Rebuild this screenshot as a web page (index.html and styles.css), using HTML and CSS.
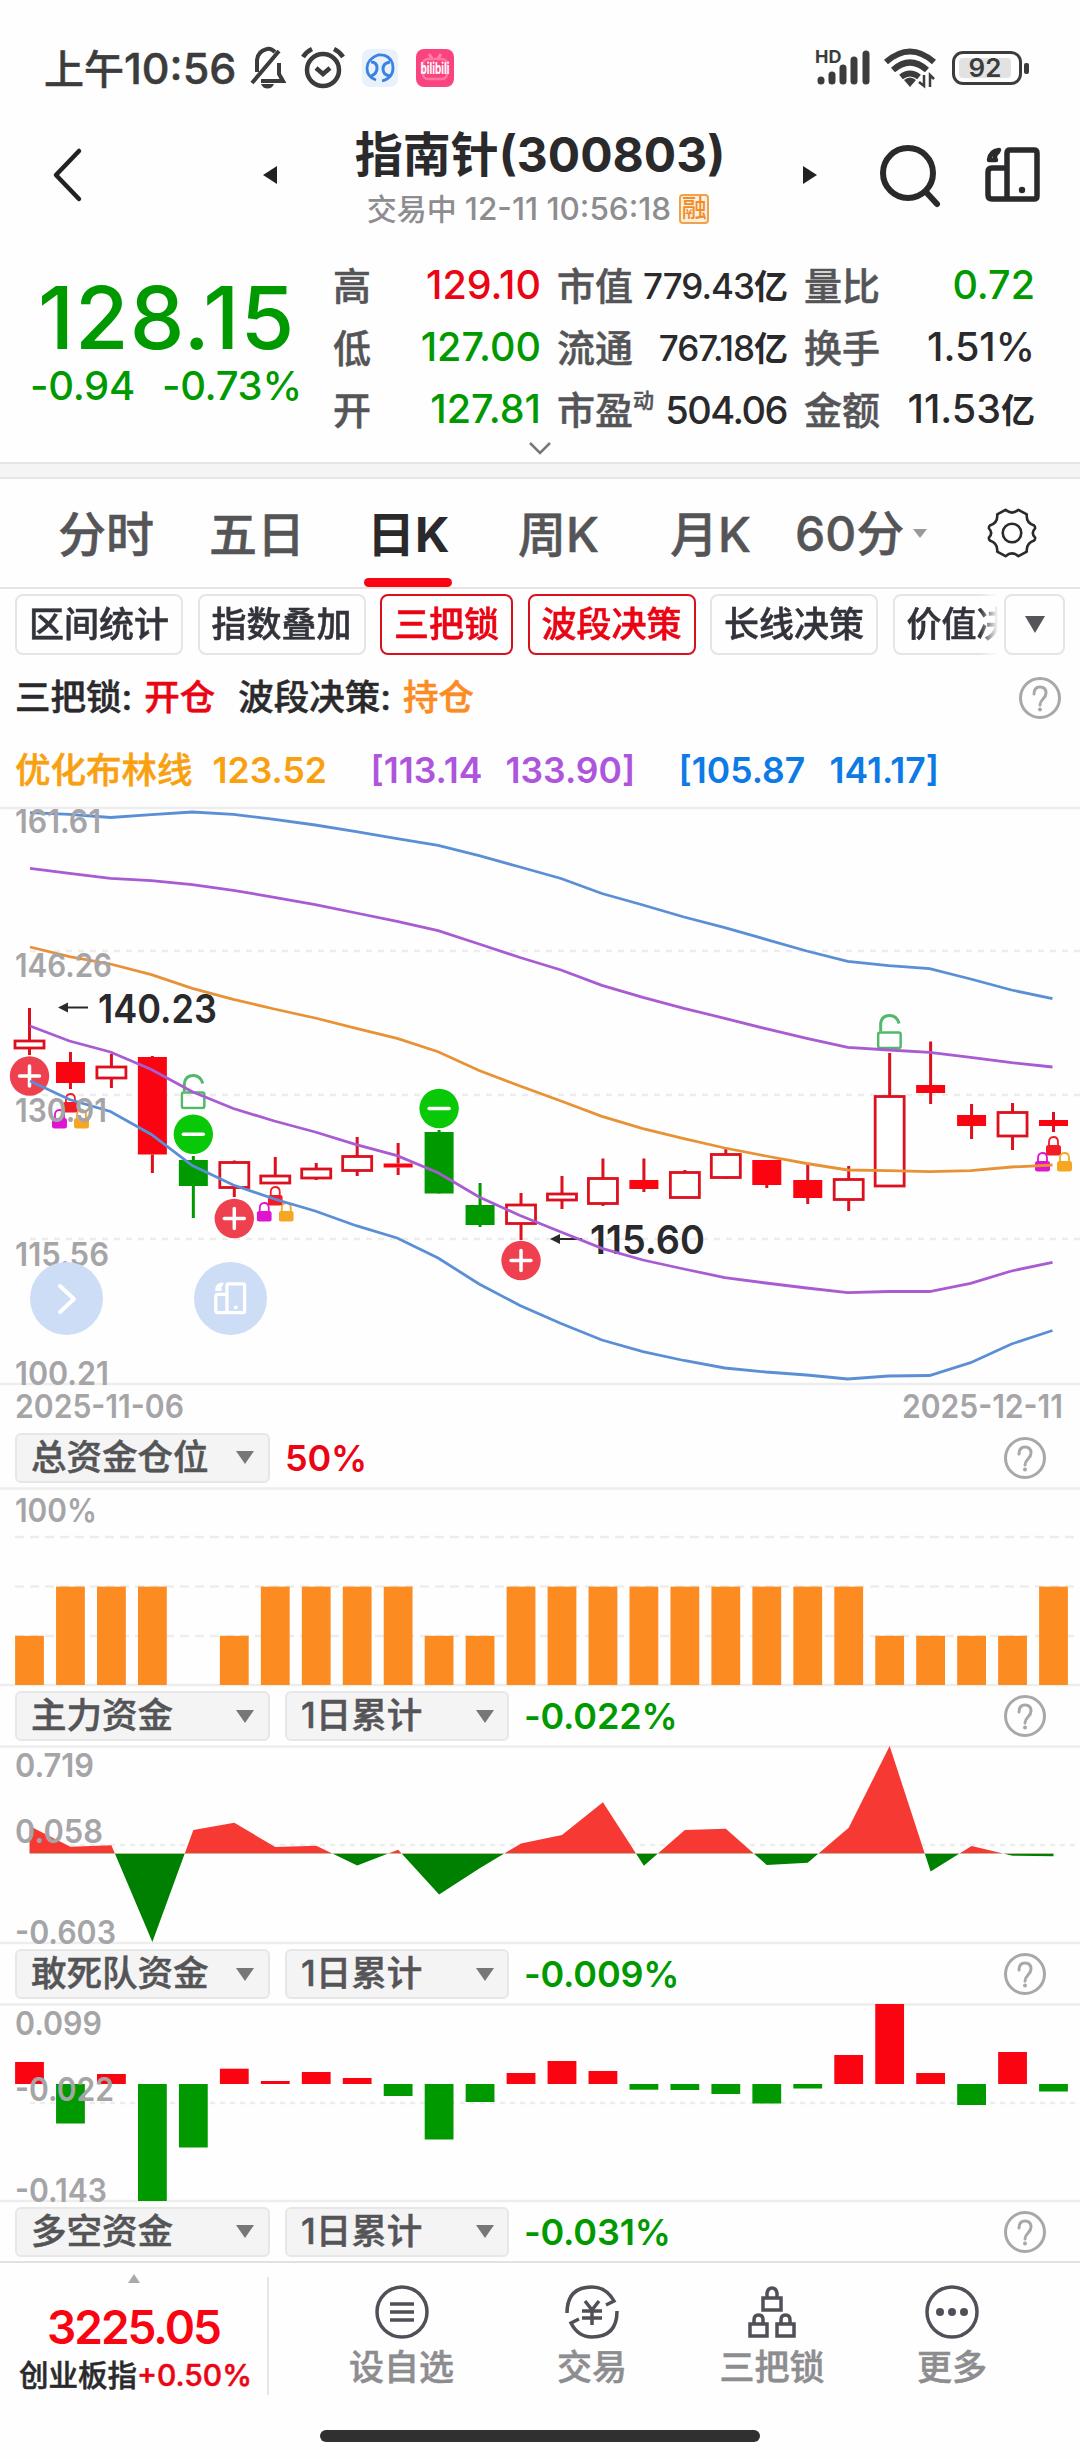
FILE: index.html
```
<!DOCTYPE html>
<html lang="zh-CN">
<head>
    <meta charset="UTF-8">
    <meta name="viewport" content="width=device-width, initial-scale=1.0">
    <title>指南针(300803)</title>
    <link rel="stylesheet" href="styles.css">
</head>
<body>

<svg width="0" height="0" class="defs">
    <symbol id="icon-rotate" viewBox="0 0 56 56">
        <path d="M22 52V6q0-3 3-3h24q3 0 3 3v43q0 3-3 3H7q-4 0-4-4V25q0-4 4-4h15" fill="none" stroke="currentColor" stroke-width="5.500" stroke-linecap="round" stroke-linejoin="round"/>
        <path d="M14 3Q5 4 4 13h7Q8 9 13 5" fill="none" stroke="currentColor" stroke-width="4.500" stroke-linecap="round" stroke-linejoin="round"/>
        <circle cx="37" cy="43" r="3.200" fill="currentColor"/>
    </symbol>
    <symbol id="icon-help" viewBox="0 0 44 44">
        <circle cx="22" cy="22" r="19.5" fill="none" stroke="#a8a8a8" stroke-width="3"/>
        <path d="M16 18q0-7 6-7t6 6q0 3-3 6t-3 6" fill="none" stroke="#a8a8a8" stroke-width="3" stroke-linecap="round"/>
        <circle cx="22" cy="33.5" r="2" fill="#a8a8a8"/>
    </symbol>
    <symbol id="lock-open" viewBox="0 0 26 36">
        <path d="M4 18V10q1-8 9-8 7 0 9.500 8" fill="none" stroke="#52b96c" stroke-width="3"/>
        <rect x="1.500" y="19" width="22.500" height="15.500" rx="2" fill="none" stroke="#52b96c" stroke-width="2.500"/>
    </symbol>
    <symbol id="lock-small" viewBox="0 0 15 20">
        <path d="M3 11V6q0-5 4.500-5T12 6v5" fill="none" stroke="currentColor" stroke-width="1.800"/>
        <rect x="0" y="9" width="15" height="10.500" rx="2.500" fill="currentColor"/>
    </symbol>
</svg>

<div class="status-bar">
    <span class="time">上午<b>10:56</b></span>
    <svg class="st-bell" width="40" height="42" viewBox="0 0 40 42" fill="none" stroke="#3c3c3c" stroke-width="4">
        <path d="M32 4L5 36M28 5q-4-4-8-3-9 2-10 11v12M32 16v11l4 7H14"/>
        <path d="M14 37h13q-2 4.500-6.500 4.500T14 37z" fill="#3c3c3c" stroke="none"/>
    </svg>
    <svg class="st-alarm" width="44" height="40" viewBox="0 0 44 40" fill="none" stroke="#3c3c3c" stroke-width="4.500">
        <circle cx="22" cy="22" r="16"/>
        <path d="M2 9q3-5 9-8M42 9q-3-5-9-8M15 20l7 6 7-6"/>
    </svg>
    <svg class="st-app" width="36" height="38" viewBox="0 0 36 38">
        <rect width="36" height="38" rx="8" fill="#e9f1fb"/>
        <path d="M14 31Q5 28 5 19T16 6q9-1 13 6M22 6q9 3 9 13T20 32" fill="none" stroke="#3b83e2" stroke-width="2.800"/>
        <path d="M9 13q6 0 6 6t-6 8M28 13q-7 1-7 7t7 7" fill="none" stroke="#3b83e2" stroke-width="3"/>
    </svg>
    <svg class="st-bili" width="38" height="38" viewBox="0 0 38 38">
        <rect width="38" height="38" rx="8" fill="#fb4380"/>
        <path d="M13 5l4 6M25 5l-4 6" stroke="#ff80a8" stroke-width="3"/>
        <rect x="7" y="10" width="24" height="20" rx="5" fill="none" stroke="#ff78a2" stroke-width="2.500"/>
        <text x="19" y="25" text-anchor="middle" textLength="29" lengthAdjust="spacingAndGlyphs">bilibili</text>
    </svg>
    <div class="status-right">
        <svg width="58" height="40" viewBox="0 0 58 40">
            <text x="0" y="15" class="hd">HD</text>
            <g stroke="#3c3c3c" stroke-width="7" stroke-linecap="round">
                <path d="M6 33v-1M17 33v-6M28 33V20M39 33V12M51 33V6"/>
            </g>
        </svg>
        <svg class="st-wifi" width="52" height="40" viewBox="0 0 52 40" fill="none" stroke="#3c3c3c" stroke-width="6">
            <path d="M2 14Q26-7 50 14M9 22q17-15 34 0M17 29q9-7 18 0"/>
            <path d="M20 32l6 7 6-7q-6-5-12 0z" fill="#3c3c3c" stroke="none"/>
            <path d="M40 27v11l-5-4M46 39V27l4 4" stroke-width="2.500"/>
        </svg>
        <div class="battery"><span>92</span></div>
    </div>
</div>

<header>
    <svg class="back" width="30" height="56" viewBox="0 0 30 56" fill="none" stroke="#222" stroke-width="4.500" stroke-linecap="round" stroke-linejoin="round"><path d="M26 4L3 28l23 24"/></svg>
    <svg class="prev" width="14" height="18"><path d="M14 0v18L0 9z" fill="#222"/></svg>
    <div class="title">
        <h1>指南针<span>(300803)</span></h1>
        <div class="subtitle"><span>交易中 <b>12-11 10:56:18</b></span><i>融</i></div>
    </div>
    <svg class="next" width="14" height="18"><path d="M0 0v18l14-9z" fill="#222"/></svg>
    <svg class="search" width="64" height="64" viewBox="0 0 64 64" fill="none" stroke="#2a2a2c" stroke-width="6" stroke-linecap="round"><circle cx="30" cy="30" r="25"/><path d="M48 49l11 12"/></svg>
    <svg class="rotate" width="56" height="56"><use href="#icon-rotate"/></svg>
</header>

<section class="quote">
    <div class="price">
        <div class="now">128.15</div>
        <div class="change"><span>-0.94</span><span>-0.73%</span></div>
    </div>
    <div class="col col-1">
        <div><label>高</label><span class="red">129.10</span></div>
        <div><label>低</label><span class="green">127.00</span></div>
        <div><label>开</label><span class="green">127.81</span></div>
    </div>
    <div class="col col-2">
        <div><label>市值</label><span class="small">779.43<b>亿</b></span></div>
        <div><label>流通</label><span class="small">767.18<b>亿</b></span></div>
        <div><label>市盈<sup>动</sup></label><span class="pe">504.06</span></div>
    </div>
    <div class="col col-3">
        <div><label>量比</label><span class="green">0.72</span></div>
        <div><label>换手</label><span>1.51%</span></div>
        <div><label>金额</label><span>11.53<b>亿</b></span></div>
    </div>
    <svg class="expand" width="24" height="14" viewBox="0 0 24 14" fill="none" stroke="#777" stroke-width="2.500"><path d="M2 2l10 10L22 2"/></svg>
</section>
<div class="divider"></div>

<nav class="tabs">
    <span class="t1">分时</span>
    <span class="t2">五日</span>
    <span class="t3 active">日K</span>
    <span class="t4">周K</span>
    <span class="t5">月K</span>
    <span class="more">60分<svg width="14" height="9"><path d="M0 0h14L7 9z" fill="#999"/></svg></span>
    <svg class="gear" width="50" height="50" viewBox="0 0 54 54" fill="none" stroke="#2a2a2c" stroke-width="2.800" stroke-linejoin="round">
        <path d="M20 2q7 6 14 0l9 5q-1 9 8 12 1 1 1 3-5 5 0 10 0 2-1 3-9 3-8 12l-9 5q-7-6-14 0l-9-5q1-9-8-12-1-1-1-3 5-5 0-10 0-2 1-3 9-3 8-12z"/>
        <circle cx="27" cy="27" r="10"/>
    </svg>
</nav>

<div class="chips">
    <div class="chip-scroll">
        <span class="chip">区间统计</span>
        <span class="chip">指数叠加</span>
        <span class="chip on">三把锁</span>
        <span class="chip on">波段决策</span>
        <span class="chip">长线决策</span>
        <span class="chip">价值决策</span>
    </div>
    <div class="chip-more"><svg width="22" height="17"><path d="M1 0h20L11 17z" fill="#555559"/></svg></div>
</div>

<div class="signal">
    <span class="k1">三把锁:</span><span class="v1">开仓</span><span class="k2">波段决策:</span><span class="v2">持仓</span>
    <svg class="help" width="44" height="44"><use href="#icon-help"/></svg>
</div>
<div class="boll">
    <span class="mid name">优化布林线</span><span class="mid n1">123.52</span>
    <span class="inner n2">[113.14</span><span class="inner n3">133.90]</span>
    <span class="outer n4">[105.87</span><span class="outer n5">141.17]</span>
</div>

<div class="main-chart">
    <svg id="kline" width="1080" height="625" viewBox="0 800 1080 625"></svg>
    <button class="float f1"><svg width="20" height="32" viewBox="0 0 20 32" fill="none" stroke="#fff" stroke-width="4" stroke-linecap="round" stroke-linejoin="round"><path d="M3 3l14 13L3 29"/></svg></button>
    <button class="float f2"><svg width="33" height="33"><use href="#icon-rotate"/></svg></button>
</div>

<div class="panel-head first">
    <div class="select wide">总资金仓位<i></i></div>
    <span class="val red">50%</span>
    <svg class="help" width="44" height="44"><use href="#icon-help"/></svg>
</div>
<svg id="position" class="sub" width="1080" height="198" viewBox="0 1488 1080 198"></svg>

<div class="panel-head">
    <div class="select wide">主力资金<i></i></div>
    <div class="select period">1日累计<i></i></div>
    <span class="val green">-0.022%</span>
    <svg class="help" width="44" height="44"><use href="#icon-help"/></svg>
</div>
<svg id="mainfund" class="sub" width="1080" height="198" viewBox="0 1746 1080 198"></svg>

<div class="panel-head">
    <div class="select wide">敢死队资金<i></i></div>
    <div class="select period">1日累计<i></i></div>
    <span class="val green">-0.009%</span>
    <svg class="help" width="44" height="44"><use href="#icon-help"/></svg>
</div>
<svg id="hotfund" class="sub" width="1080" height="198" viewBox="0 2004 1080 198"></svg>

<div class="panel-head bottom">
    <div class="select wide">多空资金<i></i></div>
    <div class="select period">1日累计<i></i></div>
    <span class="val green">-0.031%</span>
    <svg class="help" width="44" height="44"><use href="#icon-help"/></svg>
</div>

<footer>
    <div class="index">
        <svg width="12" height="9"><path d="M6 0l6 9H0z" fill="#aaa"/></svg>
        <strong>3225.05</strong>
        <p>创业板指<span>+0.50%</span></p>
    </div>
    <div class="menu">
        <a>
            <svg width="56" height="56" viewBox="0 0 56 56" fill="none" stroke="#505058" stroke-width="3.500"><circle cx="28" cy="28" r="25"/><path d="M16 20h24M16 28h24M16 36h24"/></svg>
            设自选
        </a>
        <a>
            <svg width="56" height="56" viewBox="0 0 56 56" fill="none" stroke="#505058" stroke-width="3.500">
                <path d="M3 29Q3 3 28 3q14 0 22 14l-8 4M53 27q0 26-25 26-14 0-21-14l8-4M21 17l7 9 7-9M28 26v15M18 27h20M18 34h20"/>
            </svg>
            交易
        </a>
        <a>
            <svg width="56" height="56" viewBox="0 0 56 56" fill="none" stroke="#505058" stroke-width="3.500">
                <rect x="19" y="14" width="18" height="12"/><path d="M23 14V9q1-5 5-5t5 5v5"/>
                <rect x="6" y="40" width="17" height="12"/><path d="M10 40v-4q0-5 4.500-5t4.500 5v4"/>
                <rect x="33" y="40" width="17" height="12"/><path d="M37 40v-4q0-5 4.500-5t4.500 5v4"/>
            </svg>
            三把锁
        </a>
        <a>
            <svg width="56" height="56" viewBox="0 0 56 56"><circle cx="28" cy="28" r="25" fill="none" stroke="#505058" stroke-width="3.500"/><g fill="#505058"><circle cx="16" cy="28" r="4"/><circle cx="28" cy="28" r="4"/><circle cx="40" cy="28" r="4"/></g></svg>
            更多
        </a>
    </div>
</footer>
<div class="home-bar"></div>

<script>
    const STEP = 40.96;
    const cx = i => 29.5 + STEP * i;

    function line(y, x1, dash) {
        return `<line x1="${x1}" y1="${y}" x2="1080" y2="${y}" stroke="#ededed" stroke-width="2.5" ${dash ? 'stroke-dasharray="' + dash + '"' : ''}/>`;
    }
    function label(x, y, text, width, cls) {
        return `<text x="${x}" y="${y}" textLength="${width}" lengthAdjust="spacingAndGlyphs" class="${cls || 'axis'}">${text}</text>`;
    }
    function curve(ys, color) {
        const pts = ys.map((y, i) => `${(cx(i) + (i ? -1 : 0.5)).toFixed(1)},${y}`).join(' ');
        return `<polyline points="${pts}" fill="none" stroke="${color}" stroke-width="2.8"/>`;
    }

    // K线: [类型, 最高, 实体上, 实体下, 最低]  h=空心 r=红色 g=绿色
    const candles = [
        ['h', 1008, 1041, 1048, 1055], ['r', 1052, 1062, 1083, 1089], ['h', 1054, 1067, 1078, 1088],
        ['r', 1056, 1057, 1154.5, 1173], ['g', 1156, 1160, 1186, 1218], ['h', 1160.5, 1162.5, 1187.5, 1197],
        ['h', 1157, 1176, 1183, 1184], ['h', 1163, 1169, 1178, 1180], ['h', 1137, 1156.5, 1170.5, 1176],
        ['r', 1143, 1163.5, 1167.5, 1175], ['g', 1130, 1132, 1193.5, 1194], ['g', 1183, 1205, 1225, 1227],
        ['h', 1193, 1205, 1223.5, 1240], ['h', 1176, 1194, 1200, 1209], ['h', 1158.5, 1178.5, 1203.5, 1206],
        ['r', 1158.5, 1180, 1189, 1192], ['h', 1170, 1172.5, 1197.5, 1198], ['h', 1149, 1154.5, 1177.5, 1179],
        ['r', 1160, 1160, 1185, 1188], ['r', 1164, 1180, 1198, 1204], ['h', 1166, 1179.5, 1199.5, 1211],
        ['h', 1053, 1096.5, 1186, 1186], ['r', 1041.5, 1085, 1093, 1104], ['r', 1104, 1115, 1126, 1139],
        ['h', 1103, 1112.5, 1136, 1150], ['r', 1112, 1120, 1126, 1132]
    ];

    const upper = [812.7, 814.3, 817.5, 814.7, 812, 814.3, 819.3, 825, 831.7, 838.7, 845.3, 855.7, 867, 878.5, 893.5, 905, 917, 927.7, 939.3, 951, 961.3, 965.7, 968.7, 979, 990, 998.7];
    const upper2 = [868.3, 873.3, 878.3, 880.7, 884.7, 890.3, 897.3, 904.7, 913, 921.3, 930.7, 944, 957.5, 970, 985.3, 997.3, 1008.3, 1018.3, 1028.7, 1038.3, 1047.3, 1050, 1052.3, 1057.3, 1062.7, 1067];
    const middle = [947, 956.7, 964, 974.7, 988.3, 999.3, 1009, 1018, 1028.3, 1038.3, 1051.7, 1070.5, 1086, 1101, 1116.3, 1128.7, 1138.7, 1148, 1156, 1163.5, 1170, 1170.7, 1171.7, 1170.7, 1167, 1165];
    const lower2 = [1026, 1041, 1052, 1069.5, 1091.7, 1108.5, 1121, 1132, 1144.7, 1155.7, 1172.7, 1197, 1215.5, 1232, 1248.3, 1260, 1269, 1277.7, 1283, 1288, 1292.7, 1291.5, 1291.5, 1283.3, 1271, 1262.3];
    const lower = [1081, 1099.5, 1111.5, 1134.5, 1165.5, 1185, 1199, 1211, 1225.7, 1238, 1258, 1284, 1305.5, 1323.5, 1340, 1351.7, 1360.5, 1368, 1372, 1375, 1379, 1376, 1375.5, 1362.7, 1344, 1330.5];

    function drawKline() {
        let s = line(808, 0) + line(1384, 0);
        [951, 1095, 1239].forEach(y => s += line(y, 30, '6 6'));

        candles.forEach(([type, high, top, bottom, low], i) => {
            const x = cx(i);
            const color = type === 'g' ? '#009900' : '#dc101e';
            s += `<path d="M${x} ${high}V${top}M${x} ${bottom}V${low}" stroke="${color}" stroke-width="3"/>`;
            if (type === 'h') {
                s += `<rect x="${x - 14.5}" y="${top}" width="29" height="${bottom - top}" fill="#fff" stroke="#dc101e" stroke-width="2.8"/>`;
            } else {
                s += `<rect x="${x - 14.5}" y="${top}" width="29" height="${bottom - top}" fill="${type === 'g' ? '#009900' : '#fb0412'}"/>`;
            }
        });

        // 买卖点
        [[0, 1076], [5, 1218.5], [12, 1260.5]].forEach(([i, y]) => {
            const x = cx(i);
            s += `<circle cx="${x}" cy="${y}" r="19.7" fill="#ee404e"/><path d="M${x - 10} ${y}h20M${x} ${y - 10}v20" stroke="#fff" stroke-width="3.5" stroke-linecap="round"/>`;
        });
        [[4, 1134.3], [10, 1108.5]].forEach(([i, y]) => {
            const x = cx(i);
            s += `<circle cx="${x}" cy="${y}" r="19.7" fill="#08c808"/><path d="M${x - 10} ${y}h20" stroke="#fff" stroke-width="3.5" stroke-linecap="round"/>`;
        });

        // 锁
        [[4, 1073.5], [21, 1013.5]].forEach(([i, y]) => {
            s += `<use href="#lock-open" x="${cx(i) - 13}" y="${y}" width="26" height="36"/>`;
        });
        [[1, 1093], [6, 1186], [25, 1136]].forEach(([i, y]) => {
            const x = cx(i);
            s += `<use href="#lock-small" color="#f21c24" x="${x - 7.5}" y="${y}" width="15" height="20"/>`;
            s += `<use href="#lock-small" color="#de14d0" x="${x - 18.5}" y="${y + 16}" width="15" height="20"/>`;
            s += `<use href="#lock-small" color="#f5a623" x="${x + 3.5}" y="${y + 16}" width="15" height="20"/>`;
        });

        s += label(98, 1022.5, '140.23', 119, 'mark') + label(590, 1253.5, '115.60', 115, 'mark');
        s += '<path d="M66 1007.500h22M558 1239h24" stroke="#2a2a2c" stroke-width="1.800"/><path d="M58 1007.500l10-5v10zM550 1239l10-5v10z" fill="#2a2a2c"/>';

        s += curve(upper, '#5a8fd6') + curve(upper2, '#a95bd2') + curve(middle, '#e89236') + curve(lower2, '#a95bd2') + curve(lower, '#5a8fd6');

        s += label(15, 833, '161.61', 86) + label(15, 977, '146.26', 97) + label(15, 1121.5, '130.91', 92);
        s += label(15, 1265.5, '115.56', 94) + label(15, 1384.5, '100.21', 94);
        s += label(15, 1417.5, '2025-11-06', 169) + label(902, 1417.5, '2025-12-11', 161);
        document.getElementById('kline').innerHTML = s;
    }

    function drawPosition() {
        const pos = [1, 2, 2, 2, 0, 1, 2, 2, 2, 2, 1, 1, 2, 2, 2, 2, 2, 2, 2, 2, 2, 1, 1, 1, 1, 2];
        let s = line(1488.5, 0) + line(1685, 0);
        [1537, 1586.5, 1636].forEach(y => s += line(y, 15, '9 6'));
        pos.forEach((p, i) => {
            s += `<rect x="${cx(i) - 14.4}" y="${1685 - p * 49.2}" width="28.8" height="${p * 49.2}" fill="#fc8c22"/>`;
        });
        s += label(15, 1521.5, '100%', 82);
        document.getElementById('position').innerHTML = s;
    }

    function drawMainFund() {
        const zero = 1853.5;
        const ys = [1826, 1846.7, 1845.3, 1942, 1830, 1822.7, 1847, 1845.7, 1865.5, 1849.7, 1894.5, 1868, 1843.5, 1835, 1802.3, 1865.7, 1830, 1828.7, 1865, 1862.7, 1827.7, 1746, 1871.5, 1846, 1855.7, 1856.3];
        const area = `M29.5 ${zero}` + ys.map((y, i) => `L${cx(i)} ${y}`).join('') + `V${zero}z`;
        let s = line(1746.5, 0) + line(1943, 0) + line(1845, 30, '5 5');
        s += `<clipPath id="up"><rect x="0" y="1746" width="1080" height="${zero - 1746}"/></clipPath>`;
        s += `<clipPath id="down"><rect x="0" y="${zero}" width="1080" height="92"/></clipPath>`;
        s += `<path d="${area}" fill="#f63a33" clip-path="url(#up)"/><path d="${area}" fill="#008000" clip-path="url(#down)"/>`;
        s += label(15, 1776.5, '0.719', 79) + label(15, 1842.5, '0.058', 88) + label(15, 1943.5, '-0.603', 101);
        document.getElementById('mainfund').innerHTML = s;
    }

    function drawHotFund() {
        const zero = 2084;
        const ys = [2062, 2123.5, 2074, 2201, 2147.5, 2068.7, 2081, 2072, 2078, 2096, 2139.5, 2102, 2073, 2061, 2071, 2089.7, 2090, 2094, 2103.5, 2088.5, 2055, 2004, 2073, 2105, 2052, 2091.5];
        let s = line(2004.5, 0) + line(2201, 0) + line(2103, 30, '5 5');
        ys.forEach((y, i) => {
            s += `<rect x="${cx(i) - 14.4}" y="${Math.min(y, zero)}" width="28.8" height="${Math.abs(y - zero)}" fill="${y < zero ? '#fb0412' : '#009900'}"/>`;
        });
        s += label(15, 2034.5, '0.099', 87) + label(15, 2100.5, '-0.022', 99) + label(15, 2201.5, '-0.143', 92);
        document.getElementById('hotfund').innerHTML = s;
    }

    drawKline();
    drawPosition();
    drawMainFund();
    drawHotFund();
</script>
</body>
</html>
```
FILE: styles.css
```
* {
    box-sizing: border-box;
}
body {
    margin: 0;
    width: 1080px;
    height: 2460px;
    overflow: hidden;
    background-color: #fefefe;
    color: #2a2a2c;
    font-family: Inter, "Noto Sans CJK SC", sans-serif;
    font-weight: 500;
    line-height: 1;
}
svg {
    display: block;
    flex-shrink: 0;
    overflow: visible;
}
.defs {
    position: absolute;
}
.red {
    color: #eb0514;
}
.green {
    color: #009a00;
}
.time, .col label, .tabs, .chip, .signal span, .boll .name, .select, .index p, .menu {
    -webkit-text-stroke: 0.5px currentColor;
}

/* 状态栏 */
.status-bar {
    display: flex;
    align-items: center;
    height: 120px;
    padding: 16px 58px 0 44px;
}
.time {
    width: 203px;
    font-size: 40px;
    white-space: nowrap;
    color: #3c3c3c;
}
.time b {
    font-size: 43px;
    font-weight: 500;
}
.st-alarm {
    margin-left: 14px;
}
.st-app {
    margin-left: 17px;
}
.st-bili {
    margin-left: 18px;
}
.st-bili text {
    fill: #fff;
    font-size: 16px;
    font-weight: 700;
}
.hd {
    font-size: 18px;
    font-weight: 700;
    fill: #3c3c3c;
}
.status-right {
    display: flex;
    align-items: center;
    margin-left: auto;
}
.st-wifi {
    margin-left: 11px;
}
.battery {
    position: relative;
    width: 70px;
    height: 34px;
    margin-left: 16px;
    padding: 4px;
    border: 3px solid #3c3c3c;
    border-radius: 11px;
}
.battery span {
    display: block;
    width: 52px;
    height: 20px;
    background-color: #e2e2e2;
    border-radius: 4px;
    font-size: 26px;
    font-weight: 600;
    line-height: 20px;
    text-align: center;
    color: #3c3c3c;
}
.battery::after {
    content: "";
    position: absolute;
    right: -10px;
    top: 9px;
    width: 5px;
    height: 11px;
    background-color: #3c3c3c;
    border-radius: 2px;
}

/* 标题 */
header {
    display: flex;
    align-items: center;
    height: 120px;
    padding: 0 39px 10px 53px;
}
.prev {
    margin-left: 180px;
}
.title {
    width: 526px;
    padding-top: 8px;
    text-align: center;
}
.title h1 {
    margin: 0;
    font-size: 48px;
    line-height: 60px;
    font-weight: 700;
    white-space: nowrap;
}
.subtitle {
    display: flex;
    justify-content: center;
    align-items: center;
    gap: 8px;
    height: 48px;
    margin-right: 4px;
    font-size: 30px;
    color: #8d8d90;
}
.subtitle b {
    font-size: 31.500px;
    font-weight: 500;
}
.subtitle i {
    width: 30px;
    height: 30px;
    border: 2px solid #f2a04a;
    border-radius: 4px;
    background-color: #fdf0df;
    color: #ef8d2a;
    font-size: 25px;
    font-style: normal;
    line-height: 25px;
}
.search {
    margin-left: 61px;
}
.rotate {
    margin-left: auto;
    color: #2a2a2c;
}

/* 行情 */
.quote {
    display: flex;
    position: relative;
    height: 222px;
    padding-top: 15px;
}
.price {
    width: 333px;
    color: #009a00;
}
.now {
    margin-top: 19px;
    padding-left: 38px;
    font-size: 87px;
    line-height: 87px;
    letter-spacing: 1px;
}
.change {
    display: flex;
    gap: 27px;
    padding-left: 30px;
    margin-top: 2px;
    font-size: 40px;
    line-height: 46px;
    letter-spacing: -0.3px;
}
.col > div {
    display: flex;
    justify-content: space-between;
    align-items: center;
    height: 62px;
    font-size: 39.500px;
    white-space: nowrap;
}
.col label {
    font-size: 38px;
    color: #555558;
}
.col sup {
    font-size: 21px;
    line-height: 0;
    vertical-align: 16px;
}
.col b {
    font-size: 34px;
}
.col .small {
    font-size: 35px;
    letter-spacing: -1px;
}
.col .pe {
    font-size: 38px;
    letter-spacing: -1.500px;
}
.col-1 {
    width: 208px;
}
.col-2 {
    width: 230px;
    margin-left: 16px;
}
.col-3 {
    width: 231px;
    margin-left: 17px;
}
.expand {
    position: absolute;
    left: 528px;
    bottom: 7px;
}
.divider {
    height: 17px;
    background-color: #f4f4f4;
    border-top: 2px solid #e5e5e5;
    border-bottom: 2px solid #e5e5e5;
}

/* 周期 */
.tabs {
    display: flex;
    align-items: center;
    height: 110px;
    padding-left: 58px;
    border-bottom: 2px solid #e5e5e5;
    font-size: 48px;
    color: #555558;
}
.tabs span {
    height: 108px;
    line-height: 111px;
    white-space: nowrap;
}
.t1 {
    width: 151px;
}
.t2 {
    width: 158px;
}
.t3 {
    width: 151px;
}
.t4 {
    width: 152px;
}
.t5 {
    width: 125px;
}
.tabs .active {
    position: relative;
    font-weight: 700;
    color: #2a2a2c;
    -webkit-text-stroke: 0;
}
.tabs .active::after {
    content: "";
    position: absolute;
    left: -3px;
    bottom: 0;
    width: 88px;
    height: 9px;
    border-radius: 5px;
    background-color: #fb0412;
}
.tabs .more {
    display: flex;
    align-items: center;
    gap: 9px;
}
.gear {
    margin-left: auto;
    margin-right: 43px;
}

/* 指标 */
.chips {
    display: flex;
    height: 72px;
    padding: 5px 15px 0;
}
.chip-scroll {
    display: flex;
    gap: 14.500px;
    width: 983px;
    height: 62px;
    overflow: hidden;
    -webkit-mask-image: linear-gradient(to right, #000 965px, transparent 983px);
    mask-image: linear-gradient(to right, #000 965px, transparent 983px);
}
.chip {
    flex: none;
    height: 61px;
    padding: 0 12px;
    border: 2px solid #e5e5e5;
    border-radius: 8px;
    font-size: 35px;
    line-height: 57px;
    color: #33333c;
}
.chip.on {
    border-color: #d8101e;
    color: #eb0514;
}
.chip-more {
    display: flex;
    align-items: center;
    justify-content: center;
    width: 61px;
    height: 61px;
    margin-left: 6px;
    border: 2px solid #e5e5e5;
    border-radius: 8px;
}
.signal {
    display: flex;
    align-items: center;
    height: 75px;
    padding: 0 18px 1px 15px;
    font-size: 35.500px;
}
.v1 {
    margin-left: 12px;
    color: #eb0514;
}
.k2 {
    margin-left: 23px;
}
.v2 {
    margin-left: 12px;
    color: #fb8c22;
}
.help {
    margin-left: auto;
}
.boll {
    display: flex;
    align-items: center;
    height: 64px;
    padding: 6px 0 0 15px;
    font-size: 35.500px;
    font-weight: 600;
}
.name {
    font-weight: 500;
}
.mid {
    color: #f8a010;
}
.inner {
    color: #ad55dc;
}
.outer {
    color: #0e7ae6;
}
.n1 {
    margin-left: 20px;
    width: 158px;
}
.n2 {
    width: 135px;
}
.n3 {
    width: 173px;
}
.n4 {
    width: 151px;
}

/* 图表 */
.main-chart {
    position: relative;
    height: 625px;
}
.axis {
    fill: #a5a5a8;
    font-size: 33px;
    font-weight: 600;
}
.mark {
    fill: #2a2a2c;
    font-size: 40px;
    font-weight: 600;
}
.float {
    position: absolute;
    top: 462px;
    display: flex;
    align-items: center;
    justify-content: center;
    width: 73px;
    height: 73px;
    padding: 0;
    border: none;
    border-radius: 50%;
    background-color: #cdddf6;
    color: #fff;
}
.f1 {
    left: 30px;
}
.f2 {
    left: 194px;
}
.panel-head {
    display: flex;
    align-items: center;
    height: 60px;
    padding: 0 33px 0 15px;
}
.panel-head.first {
    height: 63px;
    padding-top: 2px;
}
.panel-head.bottom {
    height: 59px;
}
.val {
    font-size: 36px;
    font-weight: 600;
    letter-spacing: -0.2px;
}
.select {
    display: flex;
    align-items: center;
    justify-content: space-between;
    height: 50px;
    margin-right: 15px;
    padding: 0 14px;
    border: 2px solid #e7e7e7;
    border-radius: 6px;
    background-color: #f4f4f4;
    font-size: 35.500px;
    color: #555558;
}
.wide {
    width: 255px;
}
.period {
    width: 224px;
    padding-right: 13px;
}
.select i {
    border: 9px solid transparent;
    border-top: 13px solid #77777a;
    border-bottom: 0;
}

/* 底部 */
footer {
    display: flex;
    height: 138px;
    border-top: 2px solid #e2e2e2;
}
.index {
    display: flex;
    flex-direction: column;
    align-items: center;
    width: 269px;
    height: 118px;
    margin-top: 14px;
    border-right: 2px solid #e5e5e5;
    white-space: nowrap;
}
.index svg {
    margin-top: -3px;
}
.index strong {
    margin-top: 21px;
    font-size: 46px;
    line-height: 46px;
    font-weight: 600;
    letter-spacing: -2px;
    color: #fb0412;
}
.index p {
    margin: 8px 0 0 4px;
    font-size: 29.500px;
    line-height: 34px;
}
.index p span {
    font-size: 30px;
    color: #eb0514;
}
.menu {
    display: grid;
    grid-template-columns: 201px 180px 180px 180px;
    margin-left: 32px;
    padding-top: 21px;
}
.menu a {
    display: flex;
    flex-direction: column;
    align-items: center;
    gap: 10px;
    font-size: 35px;
    color: #8d8d90;
}
.home-bar {
    width: 440px;
    height: 12px;
    margin: 31px auto 0;
    border-radius: 6px;
    background-color: #303030;
}
```
